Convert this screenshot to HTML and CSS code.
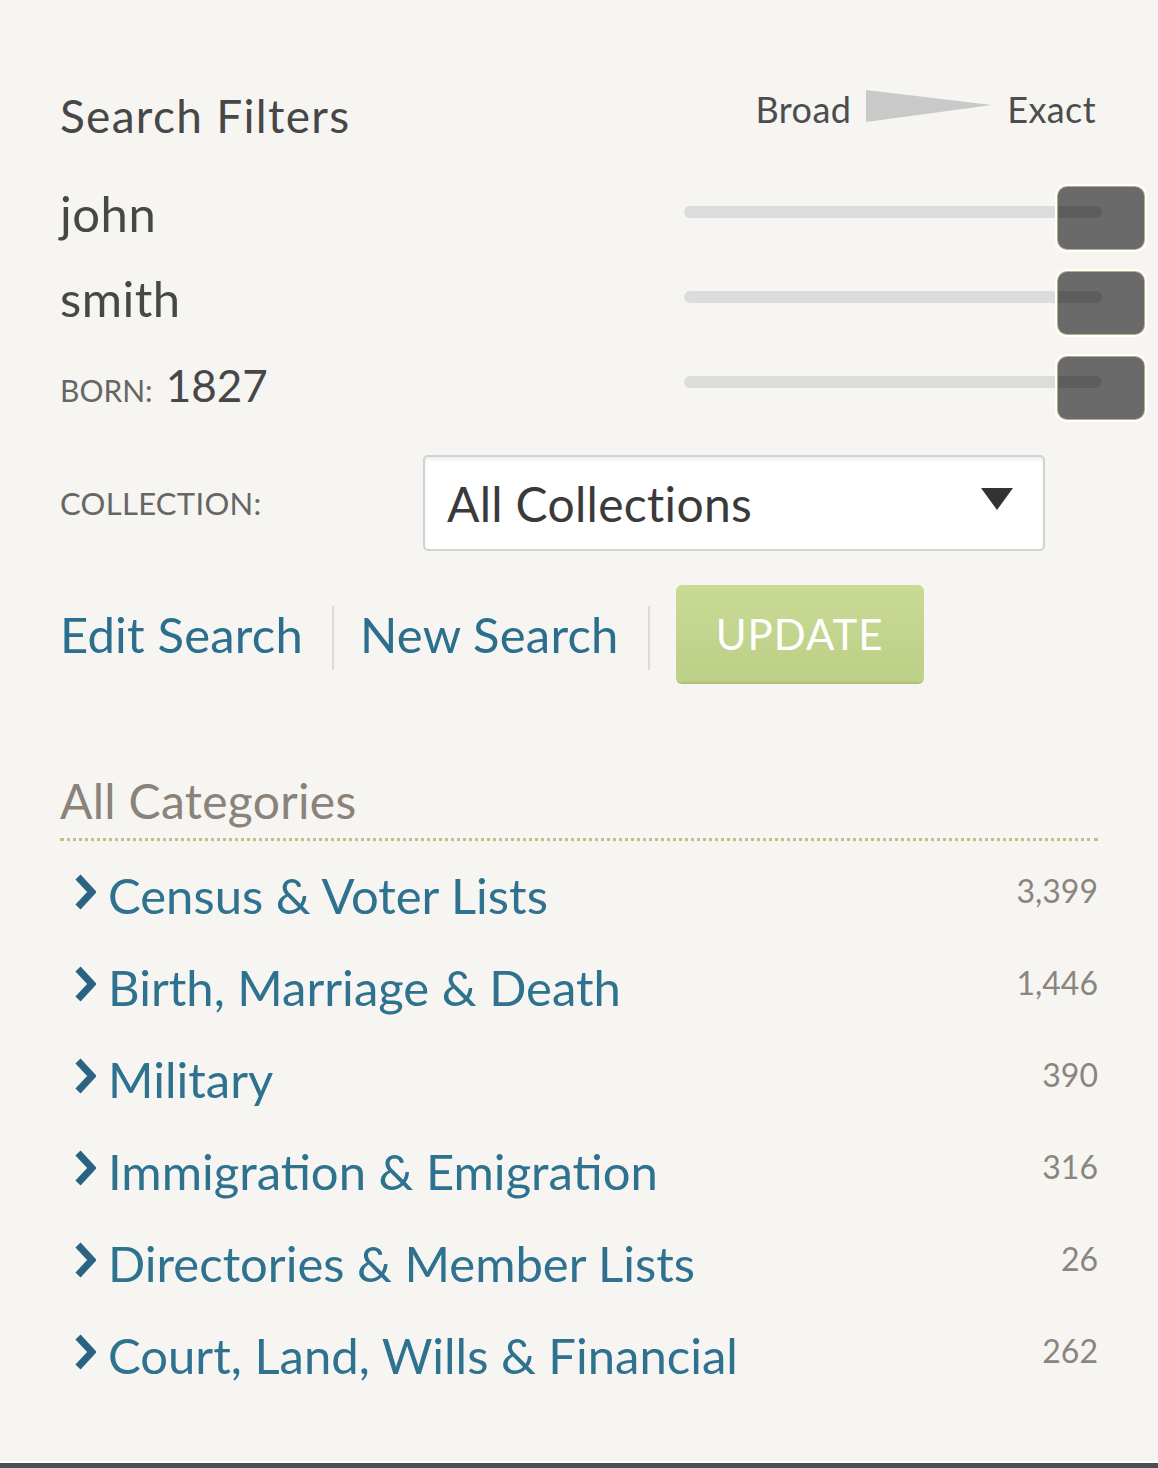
FILE: index.html
```html
<!DOCTYPE html>
<html lang="en">
<head>
<meta charset="utf-8">
<title>Search Filters</title>
<link rel="stylesheet" href="styles.css">
</head>
<body>
<div class="panel">
  <div class="head">
    <h2 class="title">Search Filters</h2>
    <div class="scale">
      <span>Broad</span>
      <svg class="wedge" width="126" height="36" viewBox="0 0 126 36"><polygon points="0,2 126,17 0,34" fill="#c9c9c9"/></svg>
      <span>Exact</span>
    </div>
  </div>

  <div class="filters">
    <div class="frow">
      <div class="fname">john</div>
      <div class="slider"><div class="track"></div><div class="thumb"></div></div>
    </div>
    <div class="frow">
      <div class="fname">smith</div>
      <div class="slider"><div class="track"></div><div class="thumb"></div></div>
    </div>
    <div class="frow">
      <div class="fname"><span class="lbl">BORN:</span> <span class="year">1827</span></div>
      <div class="slider"><div class="track"></div><div class="thumb"></div></div>
    </div>
  </div>

  <div class="collection">
    <div class="lbl coll-lbl">COLLECTION:</div>
    <div class="select">
      <span>All Collections</span>
      <svg width="32" height="22" viewBox="0 0 32 22"><polygon points="0,0 32,0 16,22" fill="#333"/></svg>
    </div>
  </div>

  <div class="actions">
    <a class="link">Edit Search</a>
    <span class="sep"></span>
    <a class="link">New Search</a>
    <span class="sep"></span>
    <button class="update">UPDATE</button>
  </div>

  <div class="cats">
    <div class="cats-title">All Categories</div>
    <ul class="cat-list">
      <li><svg class="chev" width="22" height="36" viewBox="0 0 22 36"><polyline points="4,3 18,18 4,33" fill="none" stroke="#2a6482" stroke-width="7"/></svg><span class="cname">Census &amp; Voter Lists</span><span class="count">3,399</span></li>
      <li><svg class="chev" width="22" height="36" viewBox="0 0 22 36"><polyline points="4,3 18,18 4,33" fill="none" stroke="#2a6482" stroke-width="7"/></svg><span class="cname">Birth, Marriage &amp; Death</span><span class="count">1,446</span></li>
      <li><svg class="chev" width="22" height="36" viewBox="0 0 22 36"><polyline points="4,3 18,18 4,33" fill="none" stroke="#2a6482" stroke-width="7"/></svg><span class="cname">Military</span><span class="count">390</span></li>
      <li><svg class="chev" width="22" height="36" viewBox="0 0 22 36"><polyline points="4,3 18,18 4,33" fill="none" stroke="#2a6482" stroke-width="7"/></svg><span class="cname">Immigration &amp; Emigration</span><span class="count">316</span></li>
      <li><svg class="chev" width="22" height="36" viewBox="0 0 22 36"><polyline points="4,3 18,18 4,33" fill="none" stroke="#2a6482" stroke-width="7"/></svg><span class="cname">Directories &amp; Member Lists</span><span class="count">26</span></li>
      <li><svg class="chev" width="22" height="36" viewBox="0 0 22 36"><polyline points="4,3 18,18 4,33" fill="none" stroke="#2a6482" stroke-width="7"/></svg><span class="cname">Court, Land, Wills &amp; Financial</span><span class="count">262</span></li>
    </ul>
  </div>
</div>
<div class="bottom"></div>
</body>
</html>
```
FILE: styles.css
```css
html, body {
  margin: 0;
  padding: 0;
}
body {
  width: 1158px;
  height: 1468px;
  background: #f6f5f1;
  font-family: Lato, "Open Sans", sans-serif;
  color: #4a4a4a;
  display: flex;
  flex-direction: column;
  overflow: hidden;
}
.panel {
  flex: 1;
  padding: 84px 60px 0 60px;
}
.head {
  display: flex;
  justify-content: space-between;
  align-items: flex-start;
}
.title {
  margin: 0;
  font-weight: 400;
  font-size: 46px;
  letter-spacing: 1.3px;
  line-height: 64px;
  color: #474747;
}
.scale {
  display: flex;
  align-items: center;
  gap: 15px;
  font-size: 36px;
  letter-spacing: 0.4px;
  color: #4d4d4d;
  height: 50px;
  margin-right: 2px;
}
.wedge { margin-top: -6px; }

.filters {
  margin-top: 22px;
  display: flex;
  flex-direction: column;
}
.frow {
  height: 85px;
  display: flex;
  align-items: center;
  justify-content: space-between;
}
.fname {
  font-size: 49px;
  letter-spacing: 0.5px;
  color: #474747;
}
.year {
  font-size: 44px;
  letter-spacing: 0;
}
.lbl {
  font-size: 30px;
  color: #666;
  letter-spacing: 0;
}
.slider {
  position: relative;
  width: 460px;
  height: 64px;
  margin-right: -46px;
  margin-top: 12px;
}
.track {
  position: absolute;
  left: 0;
  right: 42px;
  top: 19px;
  height: 12px;
  border-radius: 6px;
  background: #dcdcdc;
}
.thumb {
  position: absolute;
  right: 0;
  top: 0;
  width: 86px;
  height: 62px;
  background: #6a6a6a;
  border-radius: 9px;
  box-shadow: 0 0 0 1px #b8ad86, 0 0 0 3px #fff;
}
.thumb::before {
  content: "";
  position: absolute;
  left: 0;
  width: 44px;
  top: 19px;
  height: 12px;
  border-radius: 0 6px 6px 0;
  background: #5d5d5d;
}

.collection {
  margin-top: 30px;
  display: flex;
  align-items: center;
}
.coll-lbl {
  width: 363px;
  font-size: 31px;
  letter-spacing: 0.3px;
}
.select {
  width: 622px;
  height: 96px;
  background: #fff;
  border: 2px solid #d2d2d2;
  border-radius: 5px;
  box-shadow: inset 0 3px 3px rgba(0,0,0,0.06);
  display: flex;
  align-items: center;
  justify-content: space-between;
  padding: 0 30px 0 22px;
  box-sizing: border-box;
  font-size: 48px;
  letter-spacing: 0.3px;
  color: #3a3a3a;
}
.select svg { margin-top: -8px; }

.actions {
  margin-top: 34px;
  display: flex;
  align-items: center;
}
.link {
  font-size: 49px;
  letter-spacing: 0.2px;
  color: #2c6e8e;
  cursor: pointer;
}
.sep {
  width: 2px;
  height: 64px;
  background: #dedbd4;
  margin: 8px 26px 0 29px;
}
.update {
  width: 248px;
  height: 97px;
  border: none;
  border-radius: 6px;
  background: linear-gradient(#c9da95, #bccf86);
  color: #fff;
  font-family: inherit;
  font-size: 42px;
  letter-spacing: 1px;
  box-shadow: 0 2px 0 #aebf78;
}

.cats {
  margin-top: 92px;
}
.cats-title {
  font-size: 48px;
  letter-spacing: 0.3px;
  color: #8b827a;
  line-height: 54px;
  padding-bottom: 10px;
  border-bottom: 3px dotted #c8bd80;
}
.cat-list {
  list-style: none;
  margin: 0;
  padding: 0;
  margin-top: 8px;
}
.cat-list li {
  height: 92px;
  display: flex;
  align-items: center;
}
.chev {
  margin: -6px 12px 0 14px;
  flex: none;
}
.cname {
  font-size: 49px;
  color: #2e7290;
  flex: 1;
}
.count {
  font-size: 32px;
  color: #8a857f;
  margin-top: -10px;
}

.bottom {
  height: 5px;
  background: #4e4e4e;
  border-top: 2px solid #ffffff;
}
```
